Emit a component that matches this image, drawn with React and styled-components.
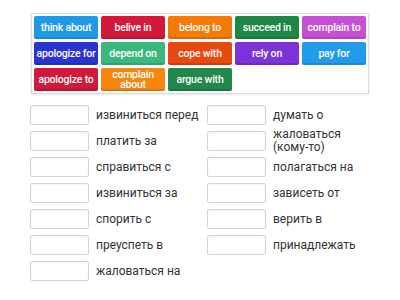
import React from 'react'
import styled, { createGlobalStyle } from 'styled-components'

const GlobalStyle = createGlobalStyle`
  body {
    margin: 0;
    background: #ffffff;
    font-family: Roboto, "Liberation Sans", sans-serif;
  }
`

const tiles = [
  { text: 'think about', color: '#1f9be6' },
  { text: 'belive in', color: '#d3193a' },
  { text: 'belong to', color: '#f57a08' },
  { text: 'succeed in', color: '#1f8646' },
  { text: 'complain to', color: '#c650d3' },
  { text: 'apologize for', color: '#2a35cf' },
  { text: 'depend on', color: '#3ab97f' },
  { text: 'cope with', color: '#e9480f' },
  { text: 'rely on', color: '#7d33d9' },
  { text: 'pay for', color: '#219cec' },
  { text: 'apologize to', color: '#d3193a' },
  { text: 'complain about', color: '#f7860c' },
  { text: 'argue with', color: '#22874a' },
]

const leftItems = [
  'извиниться перед',
  'платить за',
  'справиться с',
  'извиниться за',
  'спорить с',
  'преуспеть в',
  'жаловаться на',
]

const rightItems = [
  'думать о',
  'жаловаться (кому-то)',
  'полагаться на',
  'зависеть от',
  'верить в',
  'принадлежать',
]

const Page = styled.div`
  width: 400px;
  height: 300px;
  padding: 13px 0 0 31px;
  box-sizing: border-box;
`

const Bank = styled.div`
  width: max-content;
  border: 1px solid #dcdcdc;
  box-shadow: 0 1px 2px rgba(0, 0, 0, 0.08);
  padding: 2px;
  display: grid;
  grid-template-columns: repeat(5, 64px);
  grid-auto-rows: 23px;
  gap: 3px;
`

const Tile = styled.div`
  background: ${p => p.color};
  border-radius: 2px;
  box-shadow: inset 0 -2px 0 rgba(0, 0, 0, 0.12);
  color: #ffffff;
  font-family: Roboto, "Open Sans", sans-serif;
  font-weight: 500;
  font-size: 10.5px;
  letter-spacing: -0.2px;
  line-height: 10px;
  display: flex;
  align-items: center;
  justify-content: center;
  text-align: center;
  padding: 0 1px;
`

const Pairs = styled.div`
  display: flex;
  margin: 8px 0 0 -1px;
`

const Column = styled.div`
  width: 177px;
  display: flex;
  flex-direction: column;
`

const Row = styled.div`
  height: 26px;
  display: flex;
  align-items: center;
  gap: 7px;
`

const Box = styled.div`
  width: 59px;
  height: 20px;
  flex: none;
  background: #ffffff;
  border: 1px solid #d4d4d4;
  border-radius: 2px;
  box-sizing: border-box;
  box-shadow: inset 0 1px 2px rgba(0, 0, 0, 0.05);
`

const Label = styled.div`
  width: ${p => p.$width}px;
  font-size: 12px;
  line-height: 13px;
  color: #333333;
`

const Pair = ({ text, width }) => (
  <Row>
    <Box />
    <Label $width={width}>{text}</Label>
  </Row>
)

const App = () => (
  <>
    <GlobalStyle />
    <Page>
      <Bank>
        {tiles.map(t => (
          <Tile key={t.text} color={t.color}>{t.text}</Tile>
        ))}
      </Bank>
      <Pairs>
        <Column>
          {leftItems.map(t => <Pair key={t} text={t} width={110} />)}
        </Column>
        <Column>
          {rightItems.map(t => <Pair key={t} text={t} width={100} />)}
        </Column>
      </Pairs>
    </Page>
  </>
)

export default App
